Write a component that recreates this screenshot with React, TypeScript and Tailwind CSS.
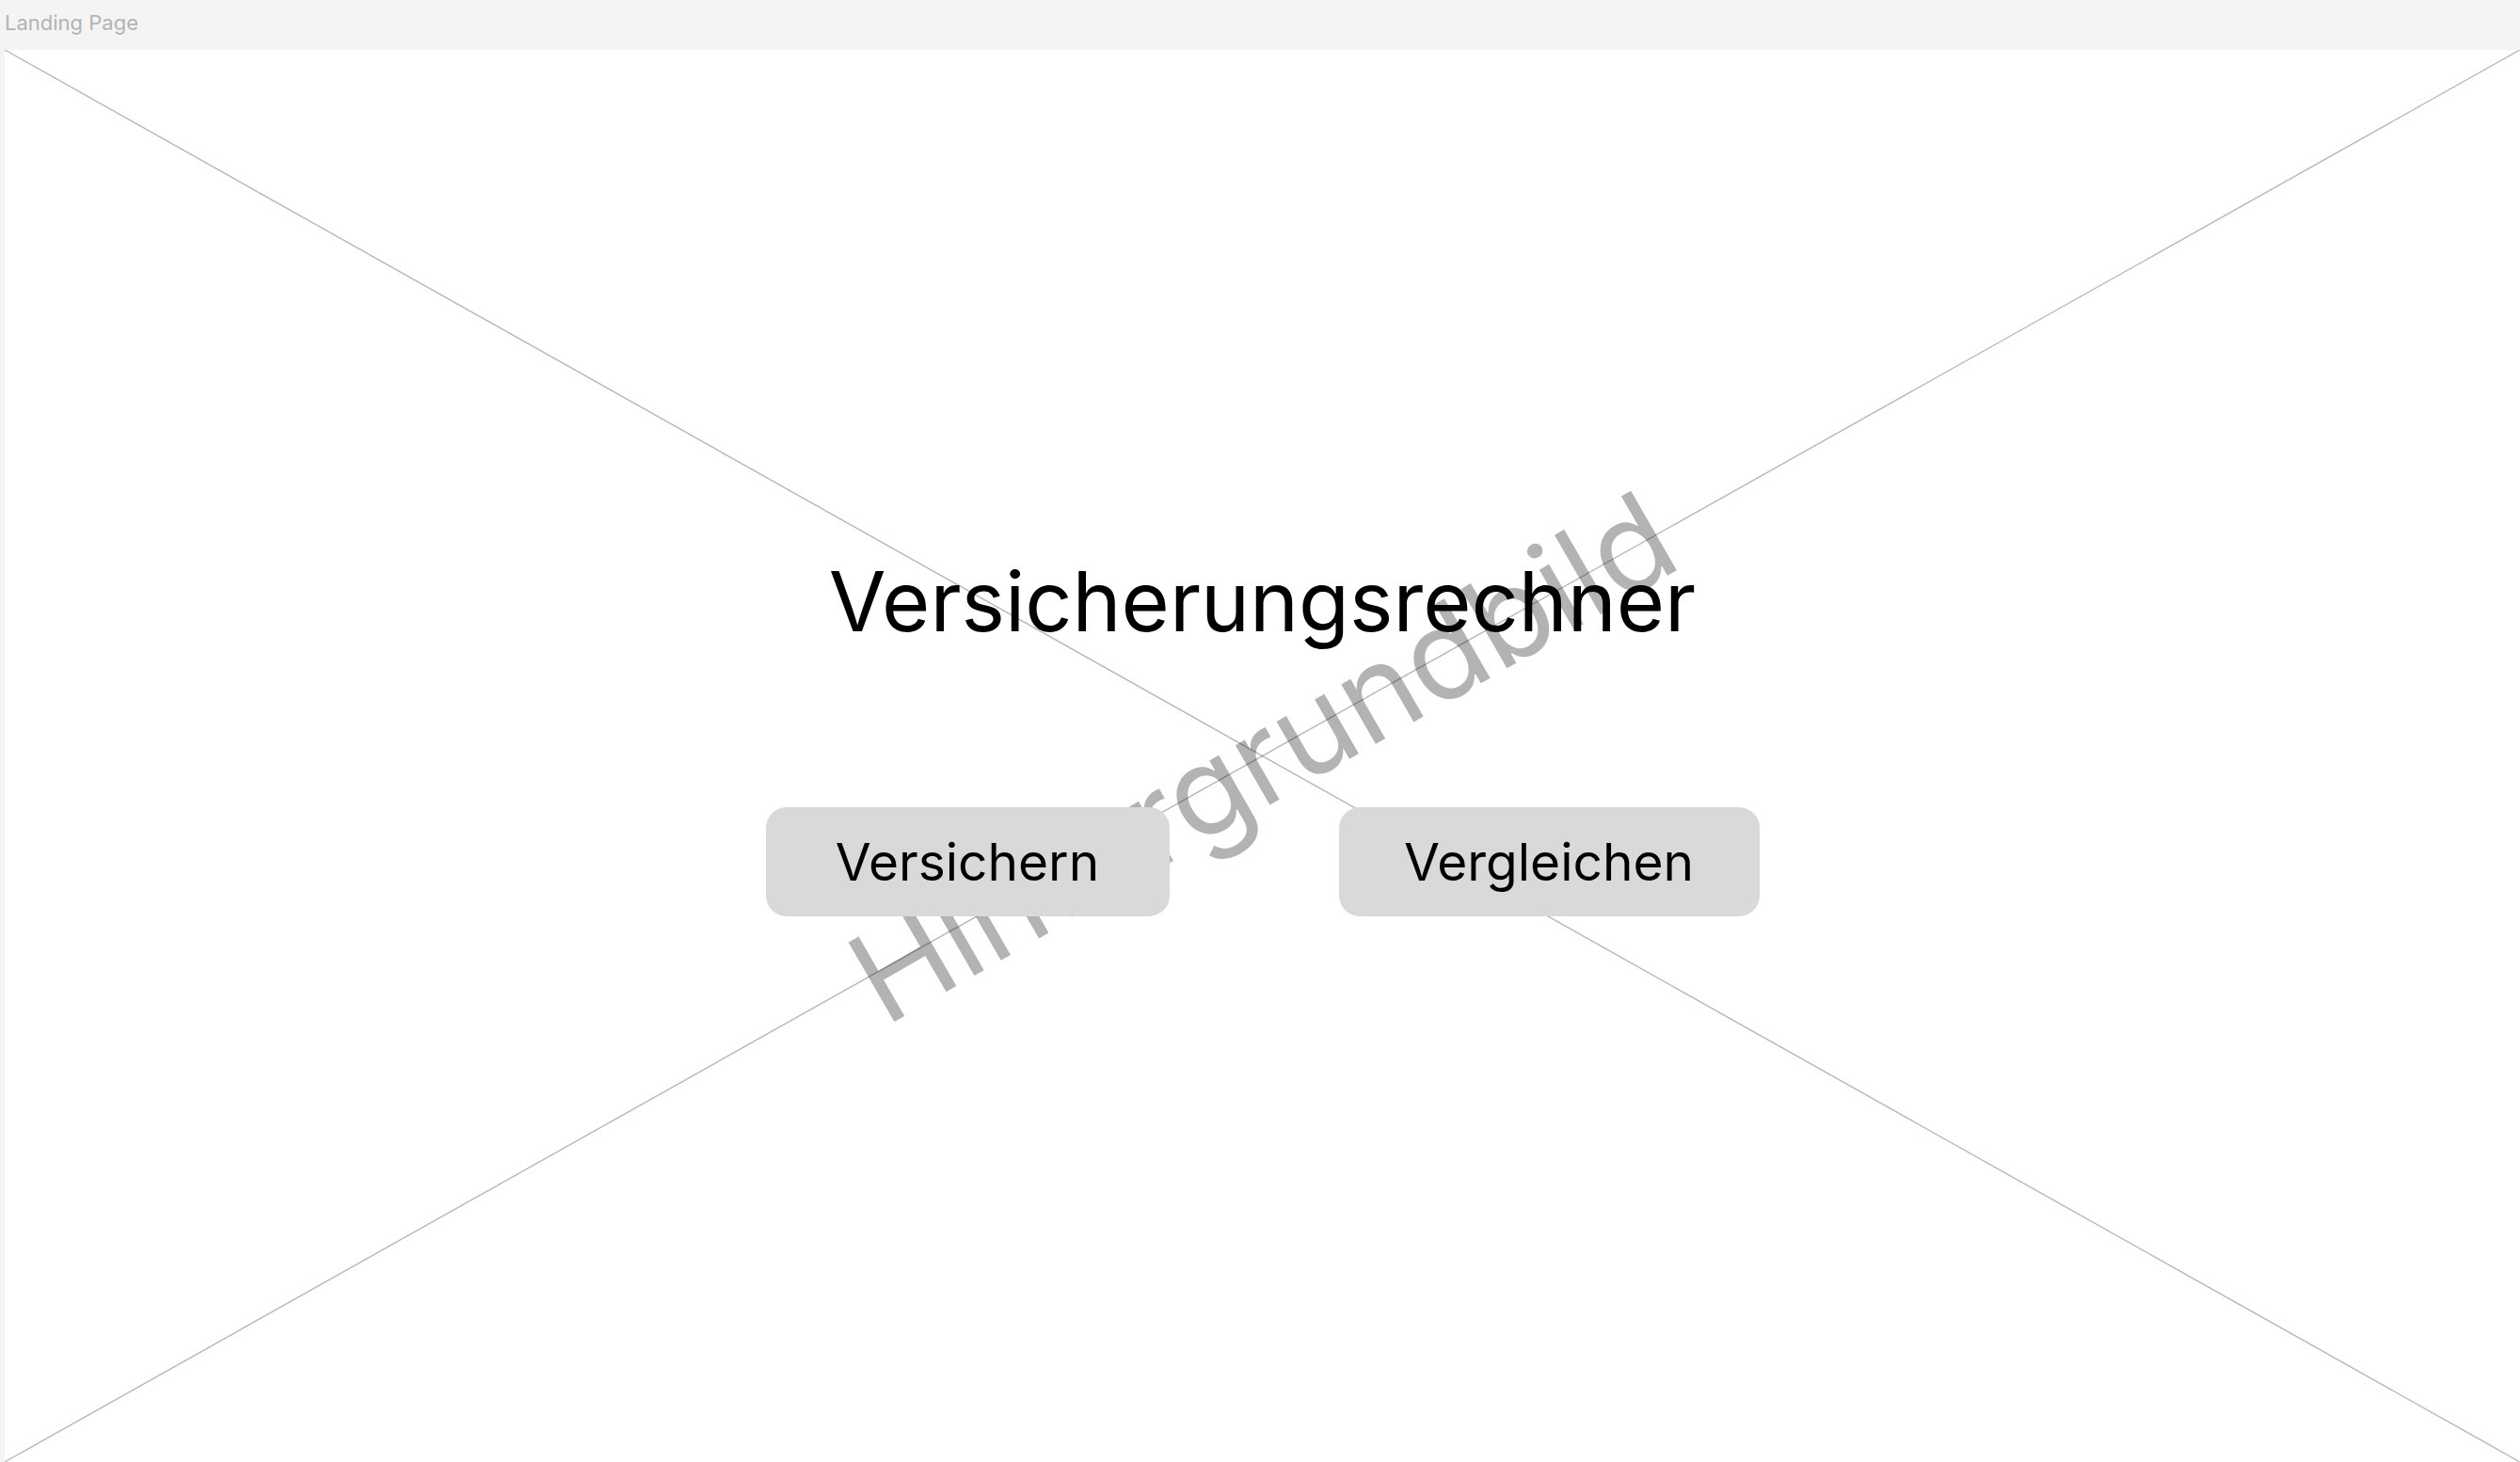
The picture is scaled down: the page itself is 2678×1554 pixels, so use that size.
import React from "react";

export default function App() {
  return (
    <div
      className="flex h-[1554px] w-[2678px] flex-col bg-[#f4f4f4]"
      style={{ fontFamily: "Inter, 'Noto Sans', sans-serif" }}
    >
      <div className="flex h-[53px] items-start pl-[5px] pt-[11px]">
        <span className="text-[22px] leading-[26px] text-[#b3b3b3]">Landing Page</span>
      </div>
      <div className="relative ml-[5px] flex-1 overflow-hidden bg-white">
        <div className="pointer-events-none absolute inset-0 flex items-center justify-center">
          <span className="rotate-[-30deg] whitespace-nowrap text-[134px] leading-none text-[#b3b3b3]">
            Hintergrundbild
          </span>
        </div>
        <svg
          className="pointer-events-none absolute inset-0 h-full w-full"
          viewBox="0 0 100 100"
          preserveAspectRatio="none"
        >
          <line x1="0" y1="0" x2="100" y2="100" stroke="rgba(0,0,0,0.27)" strokeWidth="1.5" vectorEffect="non-scaling-stroke" />
          <line x1="100" y1="0" x2="0" y2="100" stroke="rgba(0,0,0,0.27)" strokeWidth="1.5" vectorEffect="non-scaling-stroke" />
        </svg>
        <div className="relative flex flex-col items-center pt-[541px]">
          <h1 className="text-[88px] font-normal leading-[90px] text-black">Versicherungsrechner</h1>
          <div className="mt-[174px] flex gap-[180px]">
            <button className="flex h-[116px] w-[429px] items-center justify-center rounded-[22px] bg-[#d9d9d9] text-[55px] leading-none text-black">
              Versichern
            </button>
            <button className="flex h-[116px] w-[447px] items-center justify-center rounded-[22px] bg-[#d9d9d9] text-[55px] leading-none text-black">
              Vergleichen
            </button>
          </div>
        </div>
      </div>
    </div>
  );
}
